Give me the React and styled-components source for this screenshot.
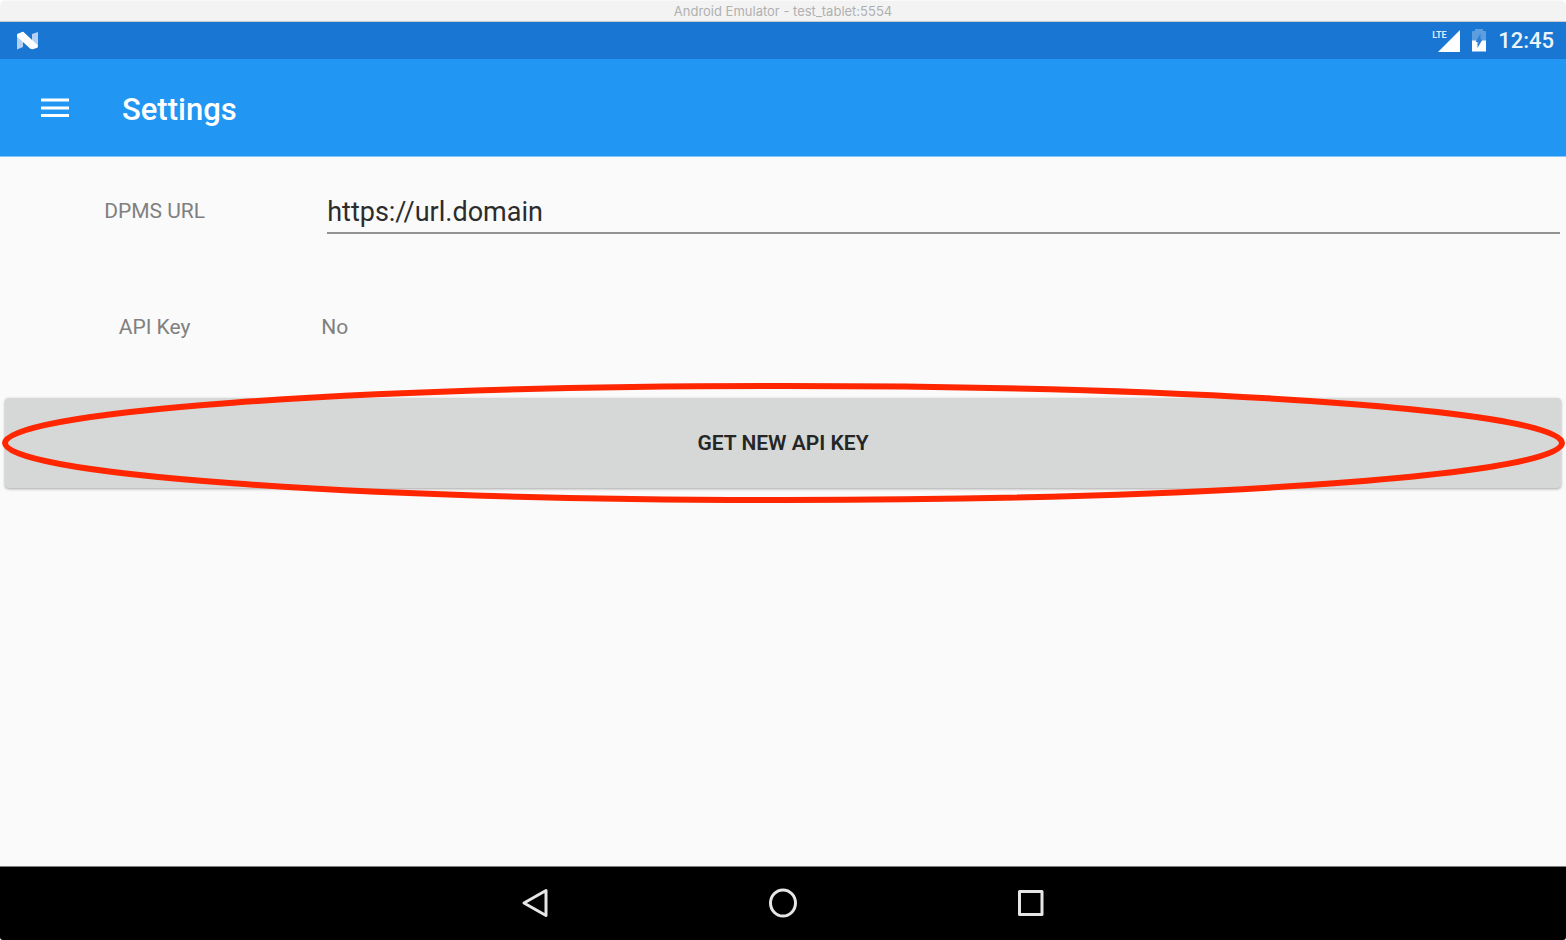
import React from "react";
import styled, { createGlobalStyle } from "styled-components";

const GlobalStyle = createGlobalStyle`
  *, *::before, *::after { box-sizing: border-box; }
  body {
    margin: 0;
    background: #fff;
    font-family: Roboto, "Liberation Sans", sans-serif;
  }
`;

const Window = styled.div`
  display: flex;
  flex-direction: column;
  min-height: 100vh;
  overflow: hidden;
  border-radius: 6px 6px 3px 3px;
  background: #fafafa;
`;

const TitleBar = styled.div`
  display: flex;
  align-items: center;
  justify-content: center;
  height: 22px;
  border-top: 1px solid #f9f9f9;
  border-bottom: 1px solid #c9cbce;
  background: #f3f3f3;
  color: #b0b0b0;
  font: 400 13px/20px Inter, "Liberation Sans", sans-serif;
`;

const StatusBar = styled.div`
  display: flex;
  align-items: center;
  justify-content: space-between;
  height: 37px;
  padding: 0 12px 0 16px;
  background: #1976d2;
  color: #fff;
`;

const StatusIcons = styled.div`
  display: flex;
  align-items: center;
  gap: 11px;
`;

const Clock = styled.time`
  font-size: 22px;
  font-weight: 500;
  line-height: 36px;
  opacity: 0.92;
`;

const Icon = styled.svg`
  display: block;
  flex: none;
`;

const Signal = styled.div`
  position: relative;
`;

const NetworkType = styled.span`
  position: absolute;
  top: 0;
  left: 0;
  color: #dceafa;
  font-size: 9px;
  font-weight: 700;
  line-height: 12px;
`;

const AppBar = styled.header`
  display: flex;
  align-items: center;
  gap: 48px;
  height: 98px;
  padding: 0 36px;
  border-bottom: 1px solid #84c4f9;
  background: #2196f3;
  color: #fff;
`;

const IconButton = styled.button`
  display: flex;
  align-items: center;
  justify-content: center;
  width: 38px;
  height: 48px;
  padding: 0;
  border: 0;
  background: transparent;
`;

const Title = styled.h1`
  margin: 0;
  padding-top: 4px;
  font-size: 31px;
  font-weight: 500;
  line-height: 36px;
`;

const Content = styled.main`
  display: grid;
  flex: 1;
  grid-auto-rows: 108px;
  align-content: start;
  gap: 8px;
`;

const Row = styled.div`
  display: grid;
  grid-template-columns: minmax(0, 1fr) minmax(0, 4fr);
  align-items: center;
  gap: 10px;
`;

const Label = styled.label`
  padding-right: 2px;
  color: #808080;
  font-size: 21px;
  line-height: 28px;
  text-align: center;
`;

const Value = styled.output`
  color: #808080;
  font-size: 21px;
  line-height: 28px;
`;

const TextField = styled.input`
  height: 46px;
  margin: 0 6px;
  padding: 4px 0 0;
  border: 0;
  border-bottom: 2px solid #929292;
  border-radius: 0;
  outline: 0;
  background: transparent;
  color: #2c2c2c;
  font: 400 27px/36px Roboto, sans-serif;
`;

const ButtonRow = styled.div`
  position: relative;
  display: flex;
  padding: 9px 5px;
`;

const RaisedButton = styled.button`
  flex: 1;
  padding: 0;
  border: 0;
  border-radius: 4px;
  background: #d6d8d7;
  box-shadow: 0 1px 3px rgba(0, 0, 0, 0.35);
  color: #252626;
  font: 600 21px/28px Roboto, sans-serif;
  text-transform: uppercase;
`;

const Highlight = styled.svg`
  position: absolute;
  top: -6px;
  left: 1px;
  width: calc(100% - 1px);
  height: 120px;
  pointer-events: none;

  ellipse {
    cx: 50%;
    cy: 50%;
    rx: calc(50% - 4px);
    ry: calc(50% - 3px);
    fill: none;
    stroke: #ff2600;
    stroke-width: 6px;
  }
`;

const NavBar = styled.nav`
  display: flex;
  justify-content: center;
  height: 74px;
  padding-bottom: 2px;
  border-top: 1px solid #7d7d7d;
  background: #000;
`;

const NavButton = styled.button`
  display: flex;
  align-items: center;
  justify-content: center;
  width: 248px;
  padding: 0;
  border: 0;
  background: transparent;
`;

function NougatIcon() {
  return (
    <Icon width="24" height="20" viewBox="0 0 24 20" aria-hidden="true">
      <path d="M1 3 7 6V16L1 18.500ZM16 3 22 1V16L16 12Z" fill="#b5d0f0" />
      <path d="M2 3.500 7 1.500 21 14.500 21 16 16.500 17.500 14.500 17 2 5.500Z" fill="#fff" stroke="#fff" strokeWidth="1.500" strokeLinejoin="round" />
    </Icon>
  );
}

function SignalIcon() {
  return (
    <Signal>
      <Icon width="28" height="24" viewBox="0 0 28 24" aria-hidden="true">
        <path d="M28 1V23H6Z" fill="#fff" />
      </Icon>
      <NetworkType>LTE</NetworkType>
    </Signal>
  );
}

function BatteryIcon() {
  return (
    <Icon width="16" height="26" viewBox="0 0 16 26" aria-label="Battery charging">
      <path d="M1 4Q1 3 2 3H4V1H12V3H14Q15 3 15 4V13H1Z" fill="#5c9ee0" />
      <path d="M1 12.500H15V23.500H1Z" fill="#fff" />
      <path d="M9.500 5.500V11.500H11.500L6.500 20V14H4.500Z" fill="#2d80d6" />
    </Icon>
  );
}

function MenuIcon() {
  return (
    <Icon width="28" height="20" viewBox="0 0 28 20" aria-hidden="true">
      <path d="M0 2H28M0 10H28M0 17.500H28" stroke="#fff" strokeWidth="3" />
    </Icon>
  );
}

function NavIcon({ children }) {
  return (
    <Icon width="32" height="32" viewBox="0 0 32 32" fill="none" stroke="#e6e6e6" strokeWidth="3" strokeLinejoin="round" aria-hidden="true">
      {children}
    </Icon>
  );
}

export default function App() {
  return (
    <>
      <GlobalStyle />
      <Window>
        <TitleBar>Android Emulator - test_tablet:5554</TitleBar>
        <StatusBar>
          <NougatIcon />
          <StatusIcons>
            <SignalIcon />
            <BatteryIcon />
            <Clock>12:45</Clock>
          </StatusIcons>
        </StatusBar>
        <AppBar>
          <IconButton type="button" aria-label="Open menu">
            <MenuIcon />
          </IconButton>
          <Title>Settings</Title>
        </AppBar>
        <Content>
          <Row>
            <Label htmlFor="dpms-url">DPMS URL</Label>
            <TextField id="dpms-url" type="text" defaultValue="https://url.domain" spellCheck={false} />
          </Row>
          <Row>
            <Label htmlFor="api-key">API Key</Label>
            <Value id="api-key">No</Value>
          </Row>
          <ButtonRow>
            <RaisedButton type="button">Get new API key</RaisedButton>
            <Highlight aria-hidden="true">
              <ellipse />
            </Highlight>
          </ButtonRow>
        </Content>
        <NavBar aria-label="System">
          <NavButton type="button" aria-label="Back">
            <NavIcon>
              <path d="M27 3.500V28.500L5 16Z" />
            </NavIcon>
          </NavButton>
          <NavButton type="button" aria-label="Home">
            <NavIcon>
              <ellipse cx="16" cy="16" rx="12.500" ry="13" />
            </NavIcon>
          </NavButton>
          <NavButton type="button" aria-label="Recent apps">
            <NavIcon>
              <rect x="4.500" y="4.500" width="22.500" height="23" />
            </NavIcon>
          </NavButton>
        </NavBar>
      </Window>
    </>
  );
}
